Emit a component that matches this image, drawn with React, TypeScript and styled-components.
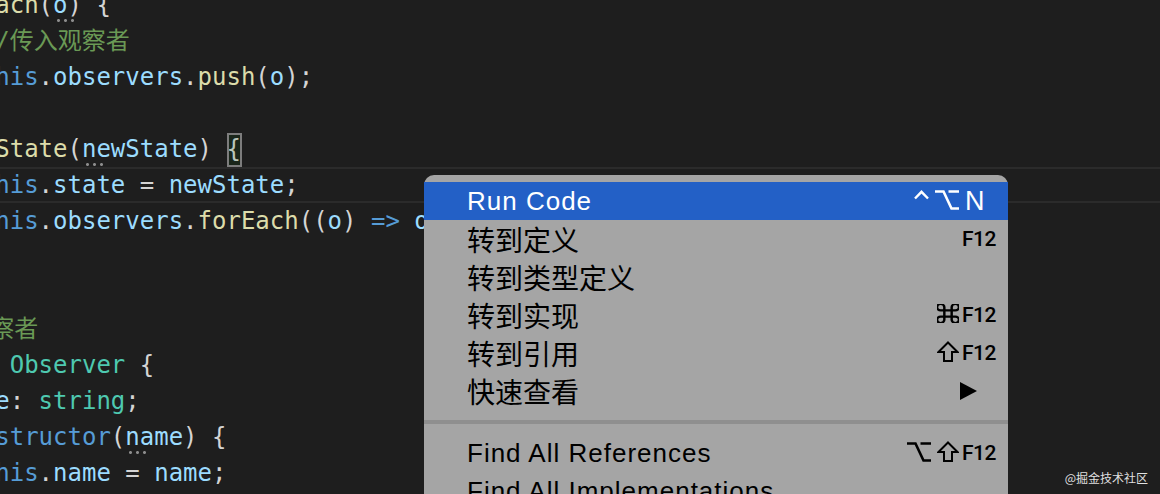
import React from "react";
import styled, { createGlobalStyle } from "styled-components";

const GlobalStyle = createGlobalStyle`
  html, body {
    margin: 0;
    padding: 0;
    background: #1e1e1e;
  }
`;

const Screen = styled.div`
  position: relative;
  width: 1160px;
  height: 494px;
  overflow: hidden;
  background: #1e1e1e;
`;

const Code = styled.div`
  margin: -13px 0 0 -77px;
  font-family: "DejaVu Sans Mono", "Noto Sans CJK SC", monospace;
  font-size: 24px;
  line-height: 36px;
  white-space: pre;
  color: #d4d4d4;
`;

const Line = styled.div<{ $current?: boolean }>`
  height: 36px;
  box-shadow: ${(p) =>
    p.$current ? "inset 0 2px #2b2b2b, inset 0 -2px #2b2b2b" : "none"};
`;

const colors = {
  kw: "#569cd6",
  v: "#9cdcfe",
  fn: "#dcdcaa",
  cm: "#6a9955",
  ty: "#4ec9b0",
  p: "#d4d4d4",
};

const Tok = styled.span<{ $k: keyof typeof colors }>`
  color: ${(p) => colors[p.$k]};
`;

// the "..." inlay hint dots under a parameter
const Hint = styled.span`
  position: relative;
  &::after {
    content: "";
    position: absolute;
    left: 2px;
    top: 28px;
    width: 19px;
    height: 3px;
    background: radial-gradient(circle, #8c8c8c 1.2px, transparent 1.7px) 0 0 / 7px 3px
      repeat-x;
  }
`;

const Bracket = styled.span`
  position: relative;
  &::before {
    content: "";
    position: absolute;
    left: 1px;
    right: -1px;
    top: -2px;
    height: 34px;
    box-sizing: border-box;
    border: 2px solid #7d7d7d;
    background: rgba(0, 100, 0, 0.12);
  }
`;

const Menu = styled.div`
  position: absolute;
  left: 424px;
  top: 175px;
  width: 584px;
  height: 380px;
  box-sizing: border-box;
  padding-top: 7px;
  background: #a5a5a5;
  border-radius: 10px 10px 0 0;
  color: #000;
`;

const Item = styled.div<{ $active?: boolean }>`
  display: flex;
  align-items: center;
  height: 38px;
  padding: 0 10px 0 43px;
  background: ${(p) => (p.$active ? "#2360c6" : "transparent")};
  color: ${(p) => (p.$active ? "#fff" : "#000")};
`;

const Label = styled.span<{ $cjk?: boolean }>`
  flex: 1;
  font-family: ${(p) =>
    p.$cjk ? '"Noto Sans CJK SC", sans-serif' : '"Liberation Sans", sans-serif'};
  font-size: ${(p) => (p.$cjk ? "28px" : "26px")};
  letter-spacing: ${(p) => (p.$cjk ? "0" : "1px")};
  line-height: 38px;
  white-space: nowrap;
`;

const Mods = styled.span`
  display: flex;
  align-items: center;
  gap: 6px;
  margin: 0 3px 3px 0;
`;

const Key = styled.span<{ $big?: boolean }>`
  display: flex;
  align-items: center;
  width: 36px;
  padding-left: ${(p) => (p.$big ? "3px" : "0")};
  box-sizing: border-box;
  font-family: ${(p) =>
    p.$big ? '"Liberation Sans", sans-serif' : 'Roboto, "Liberation Sans", sans-serif'};
  font-weight: ${(p) => (p.$big ? 400 : 500)};
  font-size: ${(p) => (p.$big ? "27px" : "21px")};
  letter-spacing: ${(p) => (p.$big ? "0" : "-0.5px")};
`;

const Glyph = styled.svg`
  display: block;
  fill: none;
  stroke: currentColor;
`;

const Arrow = styled.svg`
  margin-left: -2px;
`;

const Separator = styled.div`
  height: 4px;
  margin: 10px 0;
  background: #8f8f8f;
`;

const Watermark = styled.div`
  position: absolute;
  right: 12px;
  bottom: 10px;
  font-family: "Noto Sans CJK SC", sans-serif;
  font-size: 12px;
  line-height: 12px;
  color: rgba(255, 255, 255, 0.88);
`;

type Mod = "ctrl" | "opt" | "cmd" | "shift";

function ModGlyph({ m }: { m: Mod }) {
  if (m === "ctrl")
    return (
      <Glyph width="15" height="20" viewBox="0 0 15 20" strokeWidth="2.4">
        <polyline points="1,8.5 7.5,1.8 14,8.5" />
      </Glyph>
    );
  if (m === "opt")
    return (
      <Glyph width="24" height="20" viewBox="0 0 24 20" strokeWidth="2.6">
        <path d="M0 1.5H8.5L16.5 18.5H24M13.5 1.5H24" />
      </Glyph>
    );
  if (m === "cmd")
    return (
      <Glyph width="22" height="19" viewBox="3 3 18 18" strokeWidth="2" preserveAspectRatio="none">
        <path d="M15 6v12a3 3 0 1 0 3-3H6a3 3 0 1 0 3 3V6a3 3 0 1 0-3 3h12a3 3 0 1 0-3-3" />
      </Glyph>
    );
  return (
    <Glyph width="22" height="21" viewBox="0 0 22 21" strokeWidth="2" strokeLinejoin="miter">
      <polygon points="11,1.5 20.5,11 15,11 15,20 7,20 7,11 1.5,11" />
    </Glyph>
  );
}

type MenuRow = {
  label: string;
  cjk?: boolean;
  mods?: Mod[];
  key?: string;
  active?: boolean;
  submenu?: boolean;
};

const topRows: MenuRow[] = [
  { label: "Run Code", mods: ["ctrl", "opt"], key: "N", active: true },
  { label: "转到定义", cjk: true, key: "F12" },
  { label: "转到类型定义", cjk: true },
  { label: "转到实现", cjk: true, mods: ["cmd"], key: "F12" },
  { label: "转到引用", cjk: true, mods: ["shift"], key: "F12" },
  { label: "快速查看", cjk: true, submenu: true },
];

const bottomRows: MenuRow[] = [
  { label: "Find All References", mods: ["opt", "shift"], key: "F12" },
  { label: "Find All Implementations" },
];

function Row({ row }: { row: MenuRow }) {
  return (
    <Item $active={row.active}>
      <Label $cjk={row.cjk}>{row.label}</Label>
      {row.mods && (
        <Mods>
          {row.mods.map((m) => (
            <ModGlyph key={m} m={m} />
          ))}
        </Mods>
      )}
      <Key $big={row.active}>
        {row.key}
        {row.submenu && (
          <Arrow width="17" height="18" viewBox="0 0 17 18">
            <polygon points="0,0 17,9 0,18" fill="#000" />
          </Arrow>
        )}
      </Key>
    </Item>
  );
}

export default function App() {
  return (
    <Screen>
      <GlobalStyle />
      <Code>
        <Line>
          {"  "}
          <Tok $k="fn">attach</Tok>(
          <Hint>
            <Tok $k="v">o</Tok>
          </Hint>
          ) {"{"}
        </Line>
        <Line>
          {"    "}
          <Tok $k="cm">//传入观察者</Tok>
        </Line>
        <Line>
          {"    "}
          <Tok $k="kw">this</Tok>.<Tok $k="v">observers</Tok>.
          <Tok $k="fn">push</Tok>(<Tok $k="v">o</Tok>);
        </Line>
        <Line>{"  }"}</Line>
        <Line>
          {"  "}
          <Tok $k="fn">setState</Tok>(
          <Hint>
            <Tok $k="v">newState</Tok>
          </Hint>
          ) <Bracket>{"{"}</Bracket>
        </Line>
        <Line $current>
          {"    "}
          <Tok $k="kw">this</Tok>.<Tok $k="v">state</Tok> ={" "}
          <Tok $k="v">newState</Tok>;
        </Line>
        <Line>
          {"    "}
          <Tok $k="kw">this</Tok>.<Tok $k="v">observers</Tok>.
          <Tok $k="fn">forEach</Tok>((<Tok $k="v">o</Tok>){" "}
          <Tok $k="kw">{"=>"}</Tok> <Tok $k="v">o</Tok>.
          <Tok $k="fn">update</Tok>(<Tok $k="kw">this</Tok>));
        </Line>
        <Line>{"  }"}</Line>
        <Line>{"}"}</Line>
        <Line>
          <Tok $k="cm">// 观察者</Tok>
        </Line>
        <Line>
          <Tok $k="kw">class</Tok> <Tok $k="ty">Observer</Tok> {"{"}
        </Line>
        <Line>
          {"  "}
          <Tok $k="v">name</Tok>: <Tok $k="ty">string</Tok>;
        </Line>
        <Line>
          {"  "}
          <Tok $k="kw">constructor</Tok>(
          <Hint>
            <Tok $k="v">name</Tok>
          </Hint>
          ) {"{"}
        </Line>
        <Line>
          {"    "}
          <Tok $k="kw">this</Tok>.<Tok $k="v">name</Tok> ={" "}
          <Tok $k="v">name</Tok>;
        </Line>
      </Code>

      <Menu>
        {topRows.map((r) => (
          <Row key={r.label} row={r} />
        ))}
        <Separator />
        {bottomRows.map((r) => (
          <Row key={r.label} row={r} />
        ))}
      </Menu>

      <Watermark>@掘金技术社区</Watermark>
    </Screen>
  );
}
